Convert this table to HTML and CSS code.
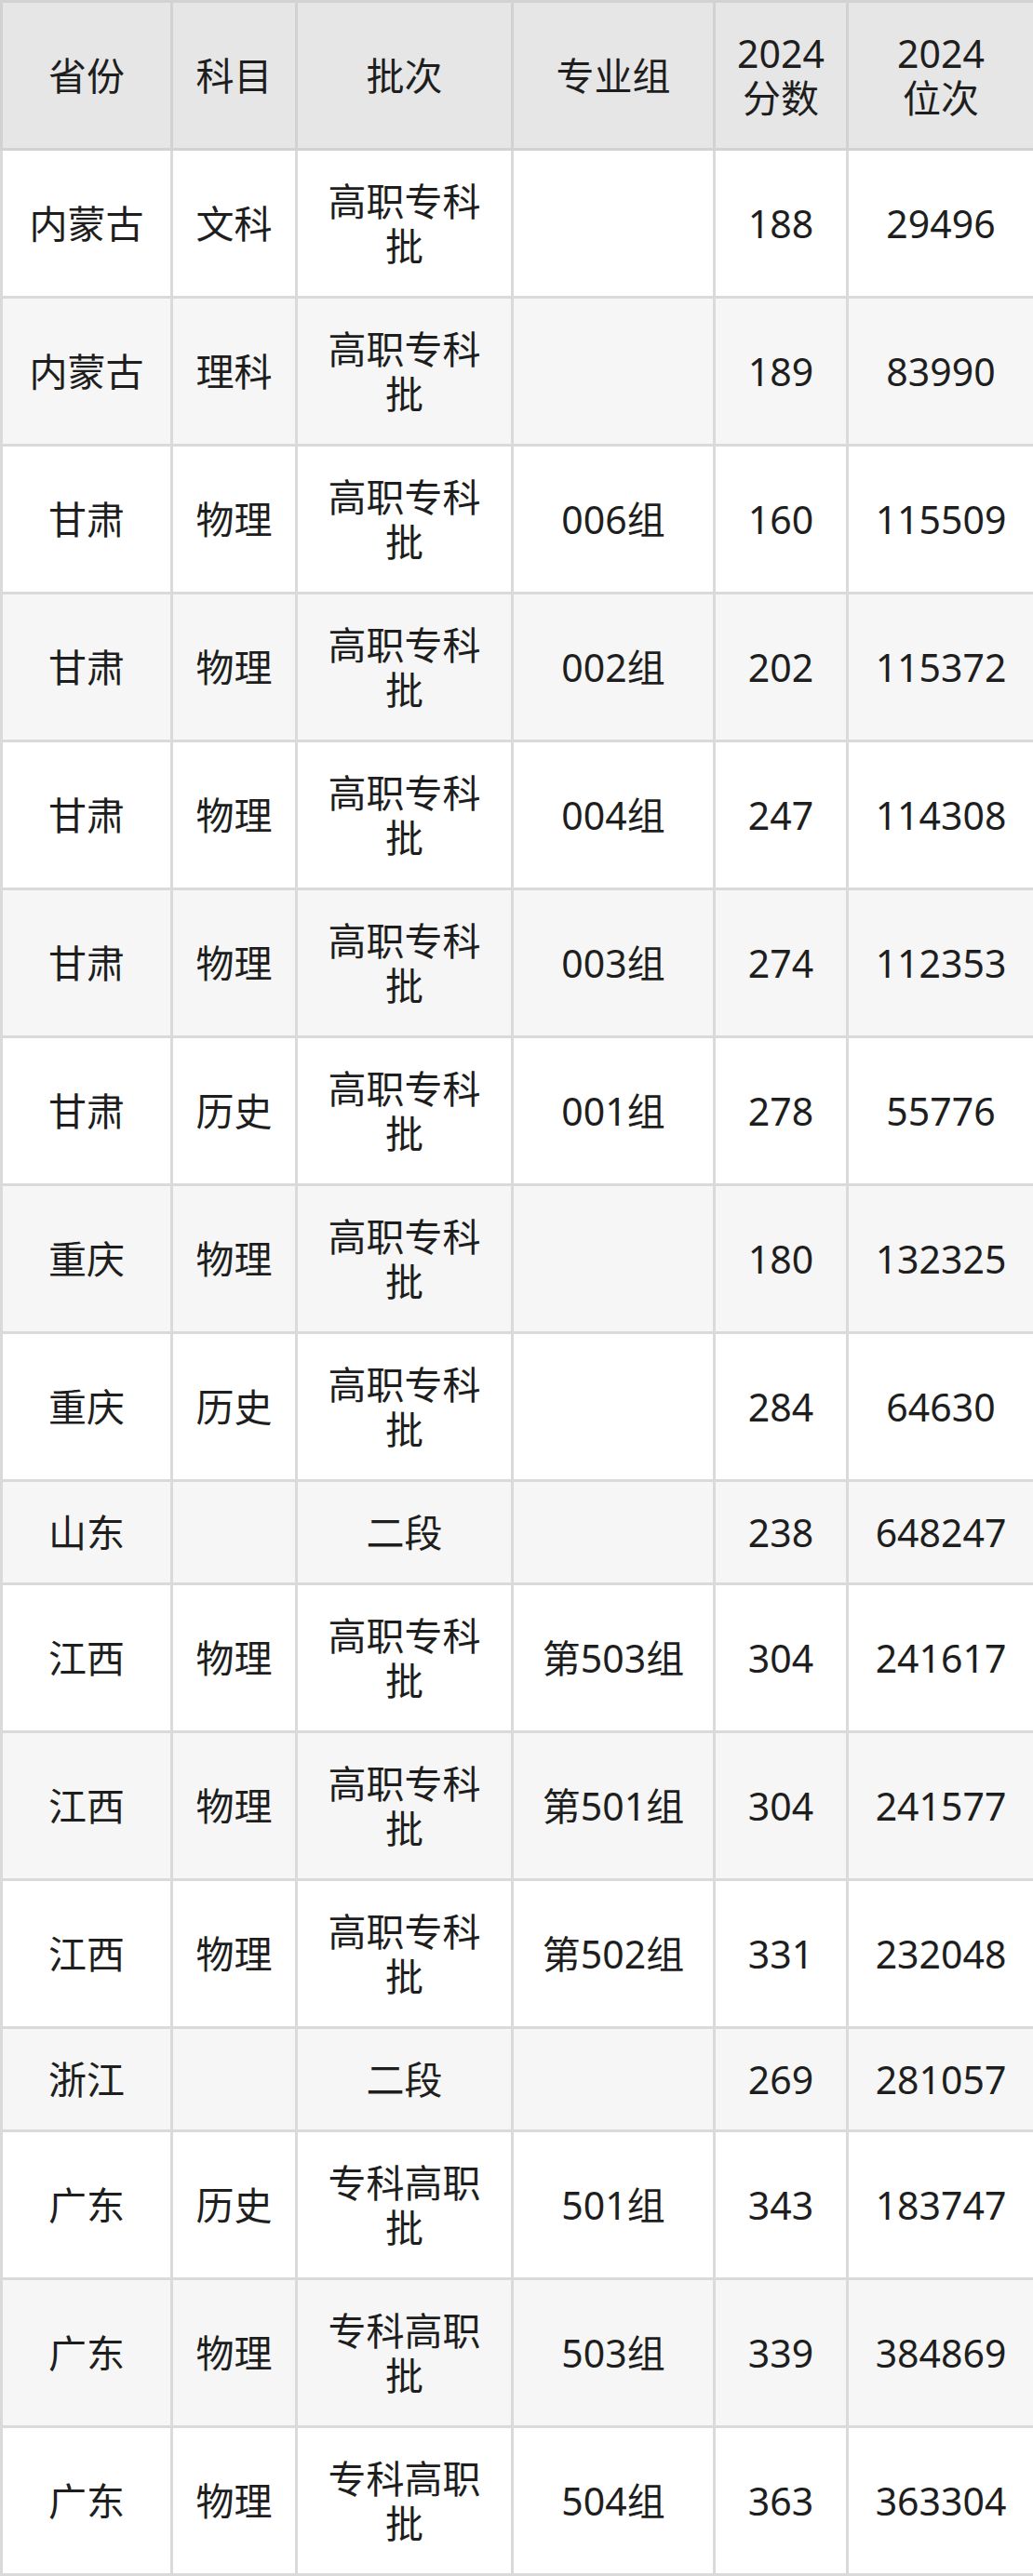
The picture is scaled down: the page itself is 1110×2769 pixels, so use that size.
FILE: index.html
```html
<!DOCTYPE html>
<html lang="zh-CN">
<head>
<meta charset="utf-8">
<title>2024 分数位次</title>
<link rel="stylesheet" href="styles.css">
</head>
<body>
<table class="score-table">
  <colgroup>
    <col class="c-prov"><col class="c-subj"><col class="c-batch"><col class="c-group"><col class="c-score"><col class="c-rank">
  </colgroup>
  <thead>
    <tr><th>省份</th><th>科目</th><th>批次</th><th>专业组</th><th>2024<br>分数</th><th>2024<br>位次</th></tr>
  </thead>
  <tbody>
    <tr><td>内蒙古</td><td>文科</td><td>高职专科批</td><td></td><td>188</td><td>29496</td></tr>
    <tr><td>内蒙古</td><td>理科</td><td>高职专科批</td><td></td><td>189</td><td>83990</td></tr>
    <tr><td>甘肃</td><td>物理</td><td>高职专科批</td><td>006组</td><td>160</td><td>115509</td></tr>
    <tr><td>甘肃</td><td>物理</td><td>高职专科批</td><td>002组</td><td>202</td><td>115372</td></tr>
    <tr><td>甘肃</td><td>物理</td><td>高职专科批</td><td>004组</td><td>247</td><td>114308</td></tr>
    <tr><td>甘肃</td><td>物理</td><td>高职专科批</td><td>003组</td><td>274</td><td>112353</td></tr>
    <tr><td>甘肃</td><td>历史</td><td>高职专科批</td><td>001组</td><td>278</td><td>55776</td></tr>
    <tr><td>重庆</td><td>物理</td><td>高职专科批</td><td></td><td>180</td><td>132325</td></tr>
    <tr><td>重庆</td><td>历史</td><td>高职专科批</td><td></td><td>284</td><td>64630</td></tr>
    <tr><td>山东</td><td></td><td>二段</td><td></td><td>238</td><td>648247</td></tr>
    <tr><td>江西</td><td>物理</td><td>高职专科批</td><td>第503组</td><td>304</td><td>241617</td></tr>
    <tr><td>江西</td><td>物理</td><td>高职专科批</td><td>第501组</td><td>304</td><td>241577</td></tr>
    <tr><td>江西</td><td>物理</td><td>高职专科批</td><td>第502组</td><td>331</td><td>232048</td></tr>
    <tr><td>浙江</td><td></td><td>二段</td><td></td><td>269</td><td>281057</td></tr>
    <tr><td>广东</td><td>历史</td><td>专科高职批</td><td>501组</td><td>343</td><td>183747</td></tr>
    <tr><td>广东</td><td>物理</td><td>专科高职批</td><td>503组</td><td>339</td><td>384869</td></tr>
    <tr><td>广东</td><td>物理</td><td>专科高职批</td><td>504组</td><td>363</td><td>363304</td></tr>
  </tbody>
</table>
</body>
</html>
```

FILE: styles.css
```css
html, body {
  margin: 0;
  padding: 0;
  background: #ffffff;
}

.score-table {
  width: 1110px;
  table-layout: fixed;
  border-collapse: collapse;
  font-family: "Noto Sans", "Noto Sans CJK SC", sans-serif;
  font-size: 41px;
  line-height: 48px;
  color: #1e1e1e;
}

.c-prov { width: 183px; }
.c-subj { width: 134px; }
.c-batch { width: 232px; }
.c-group { width: 217px; }
.c-score { width: 143px; }
.c-rank { width: 201px; }

.score-table th,
.score-table td {
  border: 3px solid #dadada;
  padding: 30px 16px;
  text-align: center;
  vertical-align: middle;
  font-weight: normal;
}

.score-table thead th {
  background: #e6e6e6;
  border-color: #d2d2d2;
}

.score-table tbody tr:nth-child(even) td {
  background: #f6f6f6;
}
```
